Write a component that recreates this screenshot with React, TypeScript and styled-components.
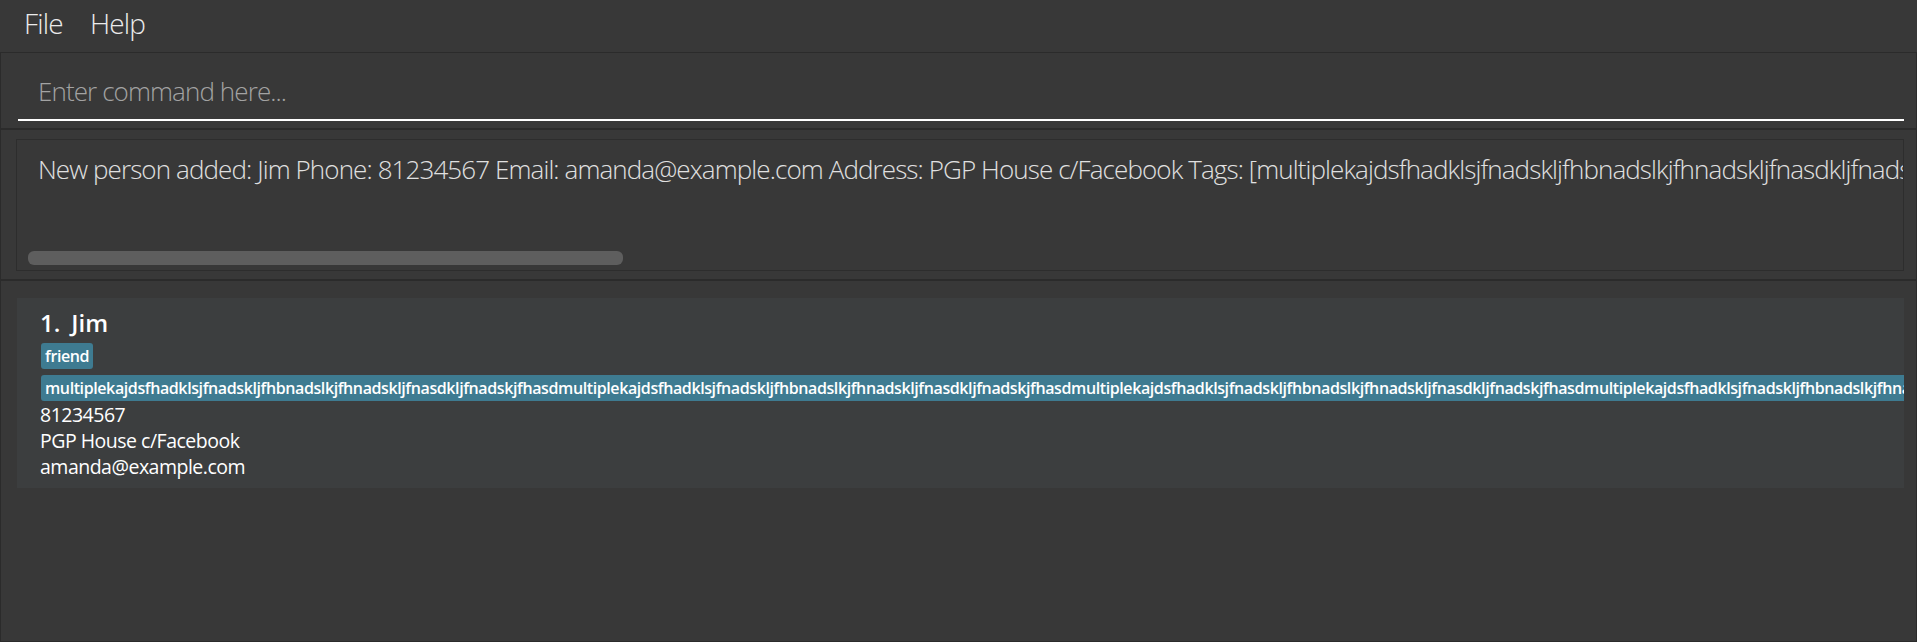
import React from 'react';
import styled, { createGlobalStyle } from 'styled-components';

const GlobalStyle = createGlobalStyle`
  html, body {
    margin: 0;
    padding: 0;
    background: #383838;
    overflow: hidden;
  }
  body {
    font-family: "Open Sans", "Noto Sans", sans-serif;
  }
  * { box-sizing: border-box; }
`;

const Window = styled.div`
  width: 100vw;
  height: 100vh;
  display: flex;
  flex-direction: column;
  background: #383838;
  overflow: hidden;
`;

const MenuBar = styled.nav`
  height: 52px;
  flex: 0 0 52px;
  display: flex;
  align-items: flex-start;
  padding: 4px 0 0 10.5px;
  background: #383838;
`;

const MenuItem = styled.span`
  padding: 0 13.5px;
  font-family: "Open Sans", sans-serif;
  font-weight: 300;
  font-size: 28px;
  line-height: 38px;
  letter-spacing: -0.8px;
  color: #ffffff;
  opacity: 0.9;
`;

const Pane = styled.section<{ $height?: number }>`
  border: 1px solid #2b2b2b;
  background: #383838;
  ${(p) => (p.$height ? `height: ${p.$height}px; flex: 0 0 ${p.$height}px;` : 'flex: 1 1 auto;')}
  min-height: 0;
  overflow: hidden;
`;

const CommandPane = styled(Pane)`
  padding: 7px 12px 6px 17px;
`;

const CommandInput = styled.input`
  display: block;
  width: 100%;
  height: 61px;
  padding: 2px 20px 0 20px;
  margin: 0;
  border: none;
  border-bottom: 2px solid #ffffff;
  outline: none;
  background: transparent;
  font-family: "Open Sans", sans-serif;
  font-weight: 300;
  font-size: 26px;
  letter-spacing: -0.9px;
  color: #ffffff;
  &::placeholder {
    color: #a3a3a3;
  }
`;

const ResultPane = styled(Pane)`
  padding: 9px 12px 8px 15px;
  display: flex;
`;

const ResultBox = styled.div`
  flex: 1 1 auto;
  min-width: 0;
  border: 1px solid #2d2d2d;
  display: flex;
  flex-direction: column;
  justify-content: space-between;
  padding: 11px 0 5px 11px;
  overflow: hidden;
`;

const ResultText = styled.div`
  padding-left: 10px;
  white-space: nowrap;
  font-family: "Open Sans", sans-serif;
  font-weight: 300;
  font-size: 26px;
  letter-spacing: -0.9px;
  color: #e0e0e0;
`;

const ScrollThumb = styled.div`
  width: 595px;
  height: 14px;
  border-radius: 6px;
  background: #5e5e5e;
`;

const ListPane = styled(Pane)`
  padding: 17px 12px 0 16px;
`;

const Card = styled.article`
  background: #3c3e3f;
  padding: 9px 0 8px 23px;
  overflow: hidden;
  display: flex;
  flex-direction: column;
  align-items: flex-start;
`;

const NameRow = styled.div`
  display: flex;
  gap: 11px;
  font-family: "Open Sans", sans-serif;
  font-weight: 600;
  font-size: 24px;
  line-height: 32px;
  color: #ffffff;
`;

const Tags = styled.div`
  display: flex;
  flex-wrap: wrap;
  row-gap: 6px;
  column-gap: 6px;
  margin-top: 4px;
  margin-bottom: 1px;
  padding-left: 1px;
  width: 100%;
`;

const Tag = styled.span`
  display: inline-block;
  white-space: nowrap;
  background: #3e7b91;
  color: #ffffff;
  border-radius: 3px;
  padding: 2px 4px;
  font-family: "Open Sans", sans-serif;
  font-weight: 600;
  font-size: 16px;
  line-height: 22px;
  letter-spacing: -0.4px;
`;

const Detail = styled.div`
  font-family: "Open Sans", sans-serif;
  font-weight: 400;
  font-size: 19.5px;
  line-height: 26px;
  letter-spacing: -0.5px;
  color: #ffffff;
`;

const LONG_TAG = 'multiplekajdsfhadklsjfnadskljfhbnadslkjfhnadskljfnasdkljfnadskjfhasd'.repeat(5);

export default function App() {
  return (
    <>
      <GlobalStyle />
      <Window>
        <MenuBar>
          <MenuItem>File</MenuItem>
          <MenuItem>Help</MenuItem>
        </MenuBar>
        <CommandPane $height={77}>
          <CommandInput placeholder="Enter command here..." />
        </CommandPane>
        <ResultPane $height={151}>
          <ResultBox>
            <ResultText>
              New person added: Jim Phone: 81234567 Email: amanda@example.com Address: PGP House c/Facebook Tags: [{LONG_TAG}][friend]
            </ResultText>
            <ScrollThumb />
          </ResultBox>
        </ResultPane>
        <ListPane>
          <Card>
            <NameRow>
              <span>1.</span>
              <span>Jim</span>
            </NameRow>
            <Tags>
              <Tag>friend</Tag>
              <Tag>{LONG_TAG}</Tag>
            </Tags>
            <Detail>81234567</Detail>
            <Detail>PGP House c/Facebook</Detail>
            <Detail>amanda@example.com</Detail>
          </Card>
        </ListPane>
      </Window>
    </>
  );
}
